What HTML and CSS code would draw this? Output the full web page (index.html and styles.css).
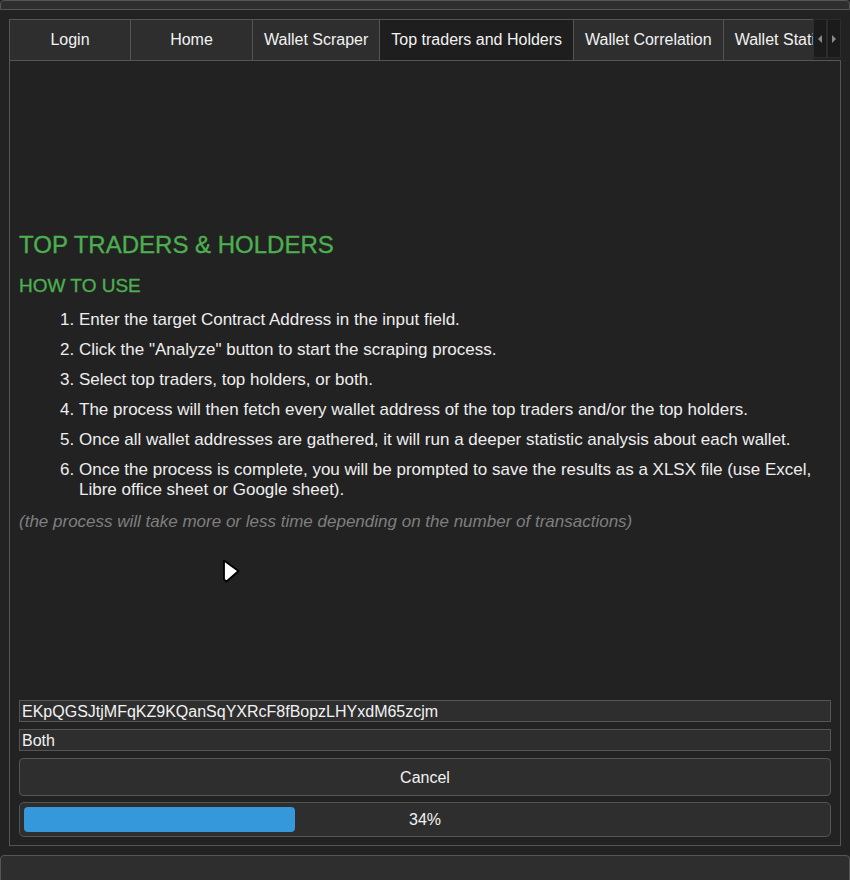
FILE: index.html
```html
<!DOCTYPE html>
<html lang="en">
<head>
<meta charset="utf-8">
<title>Top Traders &amp; Holders</title>
<link rel="stylesheet" href="styles.css">
</head>
<body>
<div class="top-strip"></div>
<div class="main">
  <div class="tabbar">
    <div class="tabs">
      <div class="tab tab-min">Login</div>
      <div class="tab tab-min">Home</div>
      <div class="tab">Wallet Scraper</div>
      <div class="tab active">Top traders and Holders</div>
      <div class="tab">Wallet Correlation</div>
      <div class="tab">Wallet Statistics</div>
    </div>
    <div class="scroll-btns">
      <div class="scroll-btn"><span class="arrow arrow-left"></span></div>
      <div class="scroll-btn"><span class="arrow arrow-right"></span></div>
    </div>
  </div>
  <div class="pane">
    <div class="doc">
      <h1 class="title">TOP TRADERS &amp; HOLDERS</h1>
      <h2 class="subtitle">HOW TO USE</h2>
      <ol class="steps">
        <li>Enter the target Contract Address in the input field.</li>
        <li>Click the "Analyze" button to start the scraping process.</li>
        <li>Select top traders, top holders, or both.</li>
        <li>The process will then fetch every wallet address of the top traders and/or the top holders.</li>
        <li>Once all wallet addresses are gathered, it will run a deeper statistic analysis about each wallet.</li>
        <li>Once the process is complete, you will be prompted to save the results as a XLSX file (use Excel, Libre office sheet or Google sheet).</li>
      </ol>
      <p class="note">(the process will take more or less time depending on the number of transactions)</p>
    </div>
    <div class="controls">
      <div class="field">EKpQGSJtjMFqKZ9KQanSqYXRcF8fBopzLHYxdM65zcjm</div>
      <div class="field">Both</div>
      <div class="btn">Cancel</div>
      <div class="progress">
        <div class="progress-fill" style="width: 33.8%"></div>
        <div class="progress-label">34%</div>
      </div>
    </div>
  </div>
</div>
<div class="bottom-strip"></div>
<svg class="cursor" width="19" height="25" viewBox="0 0 19 25">
  <polygon points="2,1.5 2,20.5 4.5,22.5 16.5,12" fill="#ffffff" stroke="#000000" stroke-width="1.8" stroke-linejoin="round"/>
</svg>
</body>
</html>
```

FILE: styles.css
```css
* {
  box-sizing: border-box;
}

html, body {
  margin: 0;
  padding: 0;
}

body {
  width: 850px;
  height: 880px;
  overflow: hidden;
  background: #222222;
  color: #eeeeee;
  font-family: "Liberation Sans", Arial, sans-serif;
  font-size: 16px;
  position: relative;
}

.top-strip {
  height: 10px;
  background: #2e2e2e;
  border: 1px solid #555555;
  border-radius: 4px 4px 0 0;
}

.main {
  padding: 9px 9px 0 9px;
}

.tabbar {
  display: flex;
  height: 41px;
  position: relative;
}

.tabs {
  display: flex;
  width: 804px;
  overflow: hidden;
  flex: none;
}

.tab {
  flex: none;
  height: 41px;
  padding: 0 11px;
  border-top: 1px solid #555555;
  border-left: 1px solid #555555;
  background: #2e2e2e;
  color: #f2f2f2;
  display: flex;
  align-items: center;
  justify-content: center;
  white-space: nowrap;
  line-height: 20px;
}

.tab-min {
  width: 121px;
}

.tab:nth-child(2) {
  width: 122px;
}

.tab.active {
  background: #1e1e1e;
}

.scroll-btns {
  display: flex;
  height: 39px;
}

.scroll-btn {
  width: 14px;
  height: 39px;
  background: #1b1b1b;
  border: 1px solid #2c2c2c;
  display: flex;
  align-items: center;
  justify-content: center;
}

.arrow {
  width: 0;
  height: 0;
  border-top: 4px solid transparent;
  border-bottom: 4px solid transparent;
}

.arrow-left {
  border-right: 4px solid #8a8a8a;
}

.arrow-right {
  border-left: 4px solid #8a8a8a;
}

.pane {
  height: 786px;
  border: 1px solid #555555;
  padding: 9px 9px 8px 9px;
  display: flex;
  flex-direction: column;
}

.doc {
  padding-top: 161px;
  font-size: 17px;
}

.title {
  margin: 0;
  font-size: 24px;
  line-height: 28px;
  font-weight: normal;
  color: #4caf50;
  -webkit-text-stroke: 0.35px #4caf50;
}

.subtitle {
  margin: 16px 0 0 0;
  font-size: 19px;
  line-height: 22px;
  font-weight: normal;
  color: #4caf50;
  -webkit-text-stroke: 0.35px #4caf50;
}

.steps {
  margin: 13px 0 0 0;
  padding-left: 60px;
  line-height: 20px;
}

.steps li + li {
  margin-top: 10px;
}

.note {
  margin: 12px 0 0 0;
  line-height: 20px;
  font-style: italic;
  color: #7f7f7f;
}

.controls {
  margin-top: auto;
  display: flex;
  flex-direction: column;
  gap: 7px;
}

.field {
  height: 22px;
  border: 1px solid #555555;
  background: #2e2e2e;
  padding: 0 2px;
  line-height: 22px;
  color: #f2f2f2;
  white-space: nowrap;
  overflow: hidden;
}

.btn {
  height: 38px;
  border: 1px solid #555555;
  border-radius: 4px;
  background: #2e2e2e;
  display: flex;
  align-items: center;
  justify-content: center;
  padding-top: 2px;
  color: #f2f2f2;
}

.progress {
  margin-top: -1px;
  height: 35px;
  border: 1px solid #555555;
  border-radius: 5px;
  background: #2e2e2e;
  padding: 4px;
  display: grid;
}

.progress-fill {
  grid-area: 1 / 1;
  height: 25px;
  background: #3498db;
  border-radius: 4px;
}

.progress-label {
  grid-area: 1 / 1;
  align-self: center;
  justify-self: center;
  color: #f2f2f2;
  line-height: 20px;
}

.bottom-strip {
  margin-top: 9px;
  height: 30px;
  background: #2e2e2e;
  border: 1px solid #555555;
  border-radius: 4px 4px 0 0;
}

.cursor {
  position: absolute;
  left: 222px;
  top: 559px;
}
```
